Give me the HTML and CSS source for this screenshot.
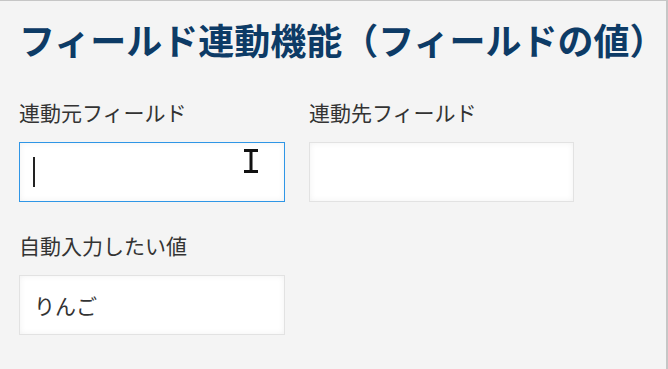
FILE: index.html
```html
<!DOCTYPE html>
<html lang="ja">

<head>
    <meta charset="UTF-8">
    <meta name="viewport" content="width=device-width, initial-scale=1.0">
    <title>フィールド連動機能</title>
    <link rel="stylesheet" href="styles.css">
</head>

<body>
    <div class="page">
        <h1 class="title">フィールド連動機能（フィールドの値）</h1>

        <div class="row">
            <div class="field">
                <div class="label">連動元フィールド</div>
                <div class="box focused">
                    <span class="caret"></span>
                    <svg class="ibeam" width="16" height="24" viewBox="0 0 16 24">
                        <path d="M1 1.5h14M8 1.5v21M1 22.5h14" stroke="#111" stroke-width="3" fill="none" />
                    </svg>
                </div>
            </div>
            <div class="field">
                <div class="label">連動先フィールド</div>
                <div class="box"></div>
            </div>
        </div>

        <div class="row">
            <div class="field">
                <div class="label">自動入力したい値</div>
                <div class="box">りんご</div>
            </div>
        </div>
    </div>
</body>

</html>
```

FILE: styles.css
```css
body {
    margin: 0;
    padding: 0;
}

* {
    box-sizing: border-box;
}

.page {
    width: 668px;
    height: 369px;
    background: #f4f4f4;
    border-top: 1px solid #c6c6c6;
    border-right: 2px solid #c6c6c6;
    padding: 14px 0 0 19px;
    font-family: "Noto Sans CJK JP", "Noto Sans", sans-serif;
    color: #333;
}

.title {
    margin: 0 0 37px 0;
    font-size: 36px;
    font-weight: 700;
    line-height: 48px;
    color: #0d3b66;
}

.row {
    display: flex;
    gap: 24px;
    margin-bottom: 31px;
}

.label {
    font-size: 21px;
    line-height: 25px;
    margin-bottom: 17px;
}

.box {
    position: relative;
    width: 266px;
    height: 60px;
    background: #fff;
    border: 1px solid #e2e2e2;
    box-shadow: inset 0 0 6px rgba(0, 0, 0, 0.06);
    padding: 0 14px;
    font-size: 21px;
    line-height: 58px;
    color: #333;
}

.row .field:nth-child(2) .box {
    width: 265px;
}

.box.focused {
    border-color: #2f96e6;
}

.caret {
    position: absolute;
    left: 13px;
    top: 14px;
    width: 2px;
    height: 30px;
    background: #222;
}

.ibeam {
    position: absolute;
    left: 223px;
    top: 6px;
}
```
